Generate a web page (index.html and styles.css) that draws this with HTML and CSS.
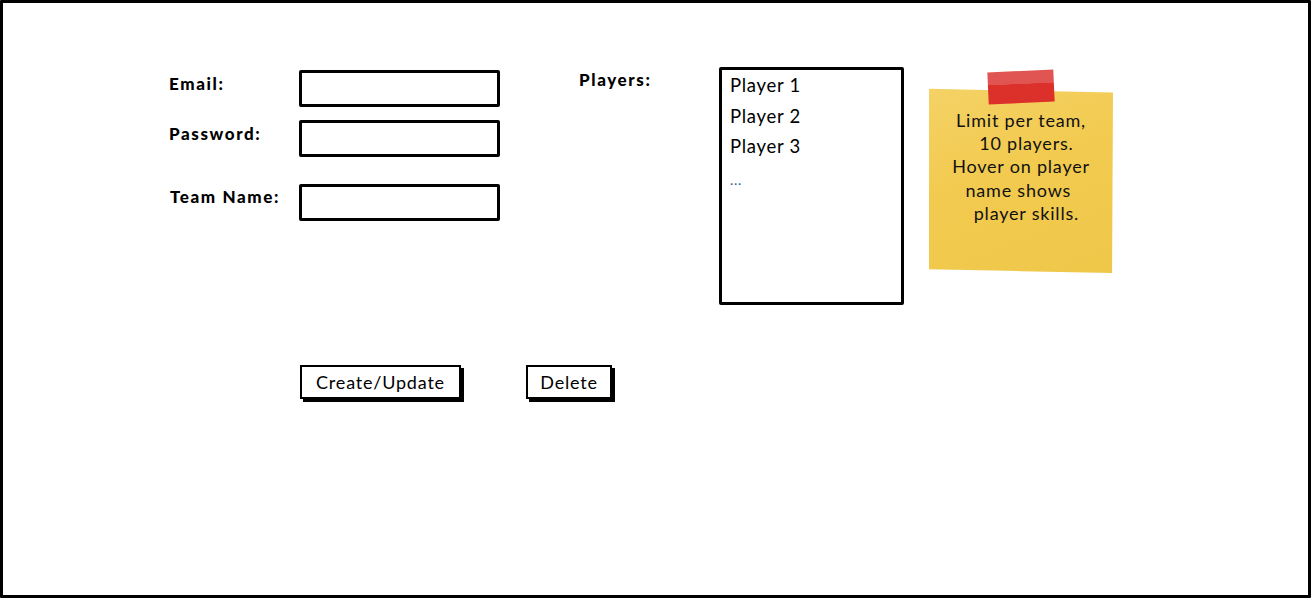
FILE: index.html
```html
<!DOCTYPE html>
<html>
<head>
<meta charset="utf-8">
<link rel="stylesheet" href="styles.css">
</head>
<body>
<div class="frame">
  <div class="top-row">
    <div class="form">
      <label class="lbl">Email:</label>
      <div class="input"></div>
      <label class="lbl">Password:</label>
      <div class="input"></div>
      <label class="lbl lbl-team">Team Name:</label>
      <div class="input input-team"></div>
    </div>
    <div class="players-label">Players:</div>
    <div class="listbox">
      <div class="item">Player 1</div>
      <div class="item">Player 2</div>
      <div class="item">Player 3</div>
      <div class="item more">...</div>
    </div>
    <div class="note">
      <div class="paper">
        <p class="note-text">Limit per team,<br>&nbsp;&nbsp;10 players.<br>Hover on player<br>name shows&nbsp;<br>&nbsp;&nbsp;player skills.</p>
      </div>
      <div class="tape"></div>
    </div>
  </div>
  <div class="buttons">
    <div class="btn btn-create">Create/Update</div>
    <div class="btn btn-delete">Delete</div>
  </div>
</div>
</body>
</html>
```

FILE: styles.css
```css
html, body {
  margin: 0;
  padding: 0;
  background: #fff;
}
body {
  font-family: "Lato", "Noto Sans", sans-serif;
  color: #000;
}
.frame {
  box-sizing: border-box;
  width: 1311px;
  height: 598px;
  border: 3px solid #000;
  border-radius: 1px;
  padding: 64px 0 0 166px;
  background: #fff;
}
.top-row {
  display: flex;
  align-items: flex-start;
}
.form {
  display: grid;
  grid-template-columns: 130px 201px;
  grid-auto-rows: 37px;
  row-gap: 13px;
  margin-top: 3px;
  align-items: center;
}
.lbl {
  font-weight: 900;
  font-size: 17px;
  letter-spacing: 1.6px;
  margin-top: -11px;
}
.lbl-team {
  margin-top: 15px;
  padding-left: 1px;
}
.input {
  box-sizing: border-box;
  height: 37px;
  border: 3px solid #000;
  border-radius: 2px;
  background: #fff;
}
.input-team {
  margin-top: 28px;
}
.players-label {
  width: 140px;
  margin-left: 79px;
  margin-top: 2px;
  font-weight: 900;
  font-size: 17px;
  letter-spacing: 1.6px;
}
.listbox {
  box-sizing: border-box;
  width: 185px;
  height: 238px;
  border: 3px solid #000;
  border-radius: 2px;
  padding: 0 0 0 8px;
}
.item {
  font-size: 18.5px;
  line-height: 30.5px;
  letter-spacing: 0.7px;
}
.item.more {
  font-size: 14px;
  color: #2b5b8a;
  line-height: 30px;
  margin-top: 3px;
}
.note {
  position: relative;
  width: 184px;
  height: 186px;
  margin-left: 25px;
  margin-top: 20px;
}
.paper {
  box-sizing: border-box;
  width: 100%;
  height: 100%;
  background: linear-gradient(160deg, #f4d266 0%, #f2ca4f 45%, #efc84a 100%);
  clip-path: polygon(0 1%, 100% 3%, 99.5% 100%, 50% 99%, 0 98%);
  padding-top: 22px;
}
.tape {
  position: absolute;
  left: 59px;
  top: -16px;
  width: 66px;
  height: 32px;
  background: linear-gradient(180deg, #e05551 0%, #e05551 40%, #dc312b 41%, #dc312b 100%);
  transform: rotate(-2.5deg);
}
.note-text {
  margin: 0;
  text-align: center;
  font-size: 18px;
  line-height: 23.2px;
  letter-spacing: 0.8px;
  color: #111;
  white-space: pre;
}
.buttons {
  display: flex;
  gap: 65px;
  margin-top: 60px;
  padding-left: 131px;
}
.btn {
  box-sizing: border-box;
  height: 34px;
  border: 2px solid #000;
  box-shadow: 3px 3px 0 #000;
  background: #fff;
  font-size: 18px;
  line-height: 30px;
  text-align: center;
  letter-spacing: 0.8px;
}
.btn-create {
  width: 161px;
}
.btn-delete {
  width: 86px;
}
```
